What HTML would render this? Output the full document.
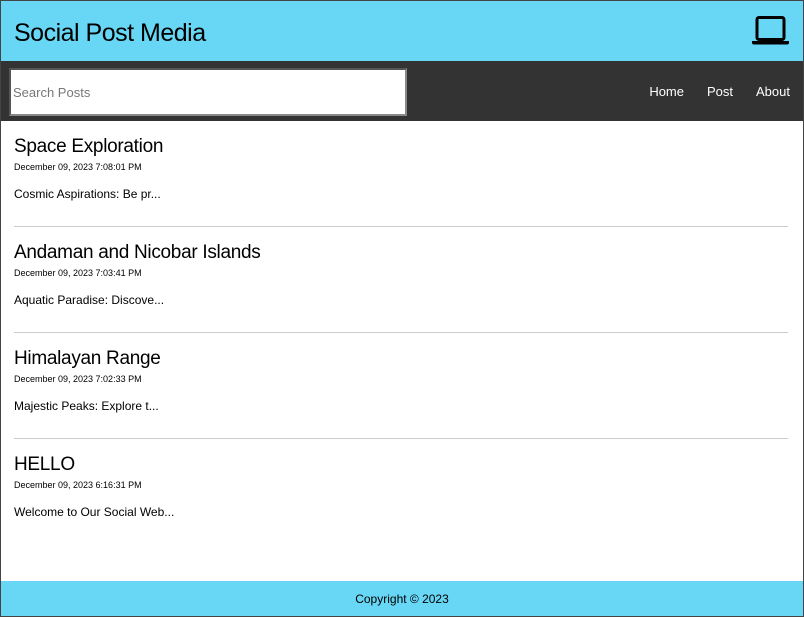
<!DOCTYPE html>
<html><head><style>
html,body{margin:0;padding:0;}
body{width:802px;height:615px;border:1px solid #444;font-family:"Liberation Sans",sans-serif;position:relative;overflow:hidden;background:#fff;}
.hdr{position:absolute;left:0;top:0;width:802px;height:60px;background:#67d7f5;}
.hdr h1{position:absolute;left:13px;top:18px;margin:0;font-size:25px;font-weight:normal;color:#000;letter-spacing:-0.5px;}
.nav{position:absolute;left:0;top:60px;width:802px;height:60px;background:#333;}
.search{position:absolute;left:8px;top:7px;width:394px;height:44px;background:#fff;border:2px solid #888;border-top-color:#555;border-left-color:#555;box-sizing:content-box;}
.search span{position:absolute;left:2px;top:15px;font-size:13px;color:#777;}
.links{position:absolute;right:13px;top:23px;color:#fff;font-size:13px;}
.links span{margin-left:23px;}
.post{position:absolute;left:13px;width:774px;height:105px;border-bottom:1px solid #ccc;}
.post h2{margin:0;position:absolute;top:15px;font-size:19px;font-weight:normal;letter-spacing:-0.3px;}
.post .d{position:absolute;top:41px;font-size:9px;}
.post p{margin:0;position:absolute;top:66px;font-size:12px;}
.ftr{position:absolute;left:0;top:580px;width:802px;height:35px;background:#67d7f5;text-align:center;font-size:12px;line-height:36px;}
</style></head><body>
<div class="hdr"><h1>Social Post Media</h1>
<svg style="position:absolute;left:751px;top:15px" width="37" height="30" viewBox="0 0 37 30"><rect x="5" y="1.5" width="27" height="22" rx="2" fill="none" stroke="#000" stroke-width="3"/><path d="M0 25h37v1.5a2 2 0 0 1-2 2H2a2 2 0 0 1-2-2z" fill="#000"/></svg></div>
<div class="nav"><div class="search"><span>Search Posts</span></div>
<div class="links"><span>Home</span><span>Post</span><span>About</span></div></div>
<div class="post" style="top:120px"><h2>Space Exploration</h2><div class="d">December 09, 2023 7:08:01 PM</div><p>Cosmic Aspirations: Be pr...</p></div>
<div class="post" style="top:226px"><h2>Andaman and Nicobar Islands</h2><div class="d">December 09, 2023 7:03:41 PM</div><p>Aquatic Paradise: Discove...</p></div>
<div class="post" style="top:332px"><h2>Himalayan Range</h2><div class="d">December 09, 2023 7:02:33 PM</div><p>Majestic Peaks: Explore t...</p></div>
<div class="post" style="top:438px;border:none"><h2>HELLO</h2><div class="d">December 09, 2023 6:16:31 PM</div><p>Welcome to Our Social Web...</p></div>
<div class="ftr">Copyright © 2023</div>
</body></html>
